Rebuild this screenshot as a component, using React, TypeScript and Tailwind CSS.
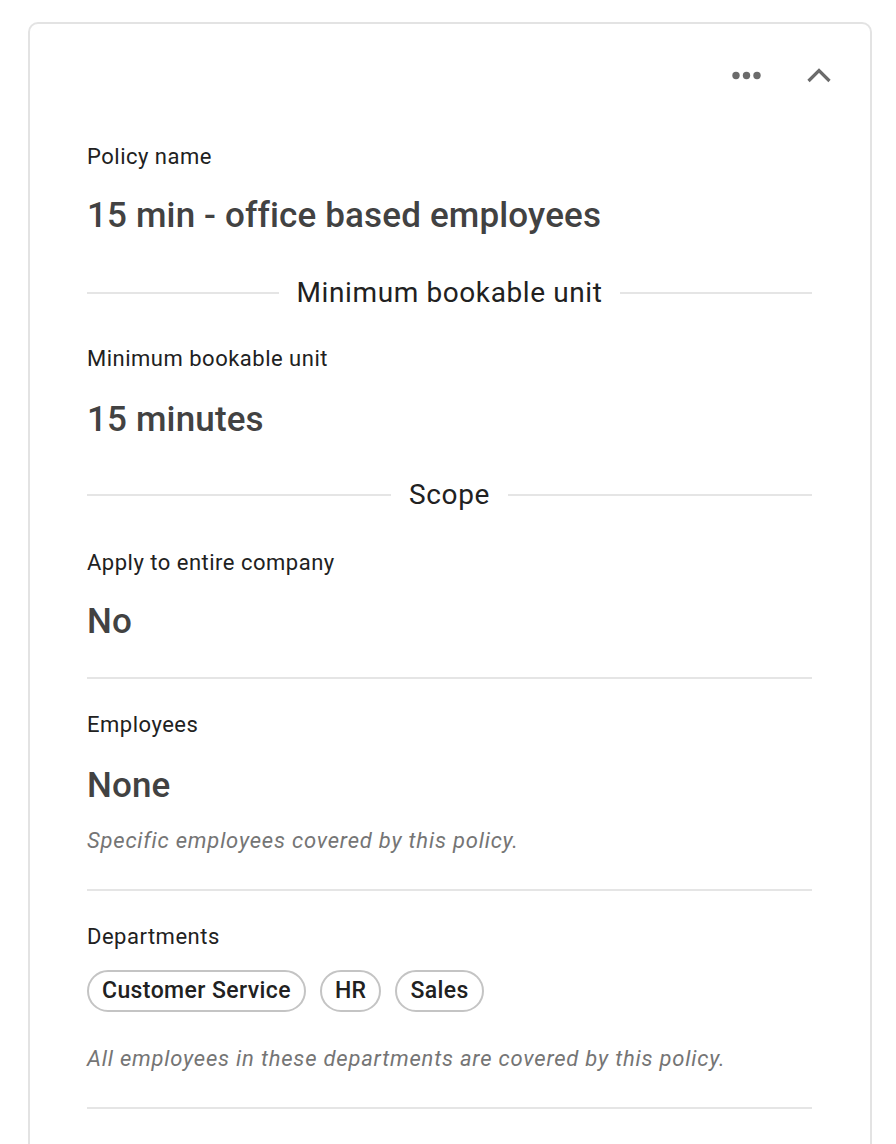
import React from "react";

function MoreIcon() {
    return (
        <svg width="29" height="9" viewBox="0 0 29 9" fill="#6b6b6b">
            <circle cx="4" cy="4.5" r="3.7" />
            <circle cx="14.5" cy="4.5" r="3.7" />
            <circle cx="25" cy="4.5" r="3.7" />
        </svg>
    );
}

function ChevronUp() {
    return (
        <svg width="24" height="15" viewBox="0 0 24 15" fill="none" stroke="#6b6b6b" strokeWidth="3.2">
            <path d="M1.5 13 L12 2.5 L22.5 13" />
        </svg>
    );
}

function Label({ children }: { children: React.ReactNode }) {
    return <div className="text-[22px] leading-[28px] tracking-[0.5px] text-[#212121]">{children}</div>;
}

function Value({ children }: { children: React.ReactNode }) {
    return <div className="text-[35px] leading-[44px] font-medium tracking-[0.15px] text-[#424242]">{children}</div>;
}

function Hint({ children }: { children: React.ReactNode }) {
    return <div className="text-[22px] leading-[28px] italic tracking-[0.8px] text-[#757575]">{children}</div>;
}

function SectionTitle({ title }: { title: string }) {
    return (
        <div className="flex items-center gap-[18px]">
            <div className="flex-1 h-[2px] bg-[#e5e5e5]" />
            <div className="text-[28px] leading-[36px] tracking-[0.6px] text-[#212121]">{title}</div>
            <div className="flex-1 h-[2px] bg-[#e5e5e5]" />
        </div>
    );
}

function Chip({ children }: { children: React.ReactNode }) {
    return (
        <span className="h-[42px] px-[13px] flex items-center rounded-full border-2 border-[#c4c4c4] text-[23px] font-medium tracking-[0.4px] text-[#212121]">
            {children}
        </span>
    );
}

export default function App() {
    return (
        <div className="bg-white min-h-[1144px] pt-[22px] pl-[28px]" style={{ fontFamily: "Roboto, 'Noto Sans', sans-serif" }}>
            <section className="w-[844px] min-h-[1200px] border-2 border-[#e3e3e3] rounded-[10px] pl-[57px] pr-[58px] pt-[37px]">
                <div className="flex justify-end items-center gap-[46px] h-[28px] mr-[-19px]">
                    <MoreIcon />
                    <ChevronUp />
                </div>

                <div className="mt-[54px]">
                    <Label>Policy name</Label>
                    <div className="mt-[23px]"><Value>15 min - office based employees</Value></div>
                </div>

                <div className="mt-[37px]"><SectionTitle title="Minimum bookable unit" /></div>

                <div className="mt-[34px]">
                    <Label>Minimum bookable unit</Label>
                    <div className="mt-[25px]"><Value>15 minutes</Value></div>
                </div>

                <div className="mt-[35px]"><SectionTitle title="Scope" /></div>

                <div className="mt-[36px]">
                    <Label>Apply to entire company</Label>
                    <div className="mt-[23px]"><Value>No</Value></div>
                </div>
                <div className="mt-[33px] h-[2px] bg-[#e5e5e5]" />

                <div className="mt-[32px]">
                    <Label>Employees</Label>
                    <div className="mt-[25px]"><Value>None</Value></div>
                    <div className="mt-[19px]"><Hint>Specific employees covered by this policy.</Hint></div>
                </div>
                <div className="mt-[34px] h-[2px] bg-[#e5e5e5]" />

                <div className="mt-[32px]">
                    <Label>Departments</Label>
                    <div className="mt-[19px] flex gap-[14px]">
                        <Chip>Customer Service</Chip>
                        <Chip>HR</Chip>
                        <Chip>Sales</Chip>
                    </div>
                    <div className="mt-[33px]"><Hint>All employees in these departments are covered by this policy.</Hint></div>
                </div>
                <div className="mt-[34px] h-[2px] bg-[#e5e5e5]" />
            </section>
        </div>
    );
}
